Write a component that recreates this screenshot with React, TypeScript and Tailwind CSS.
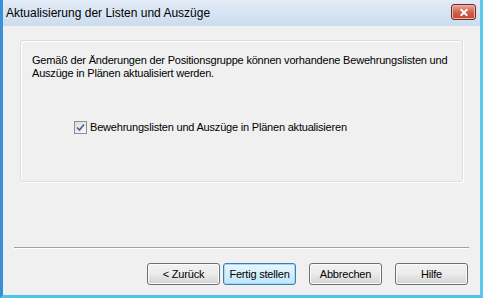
import { X } from 'lucide-react';

const Button = ({ label, primary = false, className = '' }: { label: string; primary?: boolean; className?: string }) => (
  <button
    className={
      'w-[73px] h-[22px] rounded-[3px] border text-[11px] tracking-[-0.2px] text-black leading-none flex items-center justify-center ' +
      (primary
        ? 'border-[#3c7fb1] bg-gradient-to-b from-[#eaf6fd] to-[#bee6fd] shadow-[inset_0_0_0_1px_#a6d9f4] '
        : 'border-[#707070] bg-gradient-to-b from-[#f2f2f2] via-[#ebebeb] to-[#d2d2d2] shadow-[inset_0_0_0_1px_#fcfcfc] ') +
      className
    }
  >
    {label}
  </button>
);

const App = () => {
  return (
    <div
      className="w-[483px] h-[298px] flex flex-col bg-[#cfdff0] border-l-[3px] border-r-[3px] border-b-[3px] border-l-[#3a8fd6] border-r-[#5cc8ee] border-b-[#4cc4ec] overflow-hidden"
      style={{ fontFamily: '"Liberation Sans", Arial, sans-serif' }}
    >
      {/* Title bar */}
      <div className="h-[26px] flex items-center justify-between pl-[3px] pr-[4px] bg-gradient-to-b from-[#e3ecf7] to-[#cbdcef]">
        <span className="text-[12px] text-black">Aktualisierung der Listen und Auszüge</span>
        <div className="w-[25px] h-[16px] mt-[-2px] rounded-[3px] border border-[#6d2a24] bg-gradient-to-b from-[#e9a99b] via-[#d0634f] to-[#c0452f] flex items-center justify-center shadow-[inset_0_0_0_1px_#f0b7a8]">
          <X className="w-[12px] h-[11px] text-white" strokeWidth={4} />
        </div>
      </div>

      {/* Client area */}
      <div className="flex-1 bg-[#f0f0f0] flex flex-col">
        <div className="mt-[14px] mx-[17px] h-[142px] rounded-[3px] border border-[#d5dfe5] shadow-[inset_1px_1px_0_#ffffff,1px_1px_0_#ffffff] pt-[13px] pl-[11px] pr-[4px]">
          <p className="text-[11px] leading-[13px] tracking-[-0.2px] text-black">
            Gemäß der Änderungen der Positionsgruppe können vorhandene Bewehrungslisten und Auszüge in Plänen aktualisiert werden.
          </p>
          <label className="mt-[41px] ml-[42px] flex items-center gap-[3px]">
            <span className="w-[13px] h-[13px] border border-[#8e8f8f] bg-gradient-to-br from-[#dcdcdc] to-[#fbfbfb] flex items-center justify-center">
              <svg width="9" height="9" viewBox="0 0 9 9">
                <path d="M1 4.5 L3.5 7 L8 1.5" fill="none" stroke="#4a5f97" strokeWidth="1.6" />
              </svg>
            </span>
            <span className="text-[11px] leading-[13px] tracking-[-0.2px] text-black">Bewehrungslisten und Auszüge in Plänen aktualisieren</span>
          </label>
        </div>

        <div className="mt-auto mx-[11px] h-[2px] border-t border-t-[#a0a0a0] border-b border-b-[#ffffff]" />

        <div className="flex justify-end pr-[12px] mt-[14px] mb-[10px]">
          <Button label="< Zurück" />
          <Button label="Fertig stellen" primary className="ml-[3px]" />
          <Button label="Abbrechen" className="ml-[13px]" />
          <Button label="Hilfe" className="ml-[13px]" />
        </div>
      </div>
    </div>
  );
};

export default App;
